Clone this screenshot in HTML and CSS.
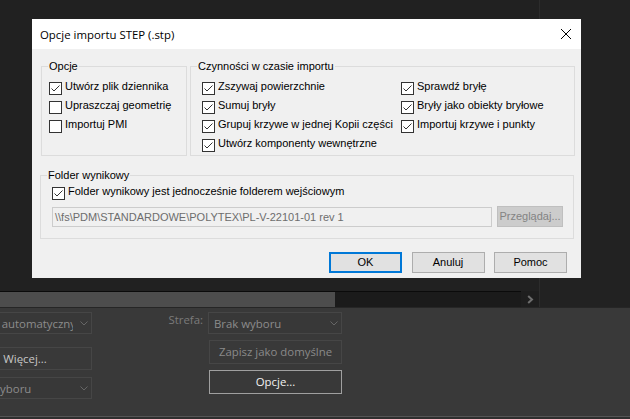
FILE: index.html
```html
<!DOCTYPE html>
<html>
<head>
<meta charset="utf-8">
<meta name="viewport" content="width=device-width, initial-scale=1">
<link rel="stylesheet" href="styles.css">
</head>
<body>
    <div class="topArea">
        <div class="mainArea">
            <div class="viewport"></div>
            <div class="hScroll">
                <div class="track"><div class="thumb"></div></div>
                <div class="scrollBtn">
                    <svg width="7" height="9" viewBox="0 0 7 9"><path d="M1.2 1 L5 4.5 L1.2 8" fill="none" stroke="#6e6e6e" stroke-width="2"/></svg>
                </div>
            </div>
        </div>
        <div class="divider"></div>
        <div class="sideArea"></div>
    </div>

    <div class="panel">
        <div class="leftCol">
            <div class="darkSelect">
                <span class="selText">Wybór automatyczny</span>
                <svg class="chev" width="8" height="5" viewBox="0 0 8 5"><path d="M0.5 0.5 L4 4 L7.5 0.5" fill="none" stroke="#666"/></svg>
            </div>
            <div class="darkBtn moreBtn">Więcej...</div>
            <div class="darkSelect lastSelect">
                <span class="selText">Brak wyboru</span>
                <svg class="chev" width="8" height="5" viewBox="0 0 8 5"><path d="M0.5 0.5 L4 4 L7.5 0.5" fill="none" stroke="#666"/></svg>
            </div>
        </div>
        <div class="labelCol"><span class="darkLabel">Strefa:</span></div>
        <div class="rightCol">
            <div class="darkSelect">
                <span class="selText">Brak wyboru</span>
                <svg class="chev" width="8" height="5" viewBox="0 0 8 5"><path d="M0.5 0.5 L4 4 L7.5 0.5" fill="none" stroke="#666"/></svg>
            </div>
            <div class="darkBtn saveBtn">Zapisz jako domyślne</div>
            <div class="darkBtn optBtn">Opcje...</div>
        </div>
    </div>
    <div class="panelFoot"></div>

    <div class="dialog">
        <div class="titleBar">
            <span class="title">Opcje importu STEP (.stp)</span>
            <span class="closeBtn">
                <svg width="10" height="10" viewBox="0 0 10 10"><path d="M0 0 L10 10 M10 0 L0 10" stroke="#000" stroke-width="1"/></svg>
            </span>
        </div>
        <div class="dialogBody">
            <div class="groupRow">
                <fieldset class="group groupOpcje">
                    <legend>Opcje</legend>
                    <div class="groupInner">
                        <label class="check"><svg class="box" width="13" height="13" viewBox="0 0 13 13"><rect x="0.5" y="0.5" width="12" height="12" fill="#fff" stroke="#333"/><path d="M2.5 6.5 L5 9 L10.5 3.5" fill="none" stroke="#333"/></svg>Utwórz plik dziennika</label>
                        <label class="check"><svg class="box" width="13" height="13" viewBox="0 0 13 13"><rect x="0.5" y="0.5" width="12" height="12" fill="#fff" stroke="#333"/></svg>Upraszczaj geometrię</label>
                        <label class="check"><svg class="box" width="13" height="13" viewBox="0 0 13 13"><rect x="0.5" y="0.5" width="12" height="12" fill="#fff" stroke="#333"/></svg>Importuj PMI</label>
                    </div>
                </fieldset>
                <fieldset class="group groupActions">
                    <legend>Czynności w czasie importu</legend>
                    <div class="groupInner actionsInner">
                        <div class="actionsCol firstCol">
                            <label class="check"><svg class="box" width="13" height="13" viewBox="0 0 13 13"><rect x="0.5" y="0.5" width="12" height="12" fill="#fff" stroke="#333"/><path d="M2.5 6.5 L5 9 L10.5 3.5" fill="none" stroke="#333"/></svg>Zszywaj powierzchnie</label>
                            <label class="check"><svg class="box" width="13" height="13" viewBox="0 0 13 13"><rect x="0.5" y="0.5" width="12" height="12" fill="#fff" stroke="#333"/><path d="M2.5 6.5 L5 9 L10.5 3.5" fill="none" stroke="#333"/></svg>Sumuj bryły</label>
                            <label class="check"><svg class="box" width="13" height="13" viewBox="0 0 13 13"><rect x="0.5" y="0.5" width="12" height="12" fill="#fff" stroke="#333"/><path d="M2.5 6.5 L5 9 L10.5 3.5" fill="none" stroke="#333"/></svg>Grupuj krzywe w jednej Kopii części</label>
                            <label class="check"><svg class="box" width="13" height="13" viewBox="0 0 13 13"><rect x="0.5" y="0.5" width="12" height="12" fill="#fff" stroke="#333"/><path d="M2.5 6.5 L5 9 L10.5 3.5" fill="none" stroke="#333"/></svg>Utwórz komponenty wewnętrzne</label>
                        </div>
                        <div class="actionsCol">
                            <label class="check"><svg class="box" width="13" height="13" viewBox="0 0 13 13"><rect x="0.5" y="0.5" width="12" height="12" fill="#fff" stroke="#333"/><path d="M2.5 6.5 L5 9 L10.5 3.5" fill="none" stroke="#333"/></svg>Sprawdź bryłę</label>
                            <label class="check"><svg class="box" width="13" height="13" viewBox="0 0 13 13"><rect x="0.5" y="0.5" width="12" height="12" fill="#fff" stroke="#333"/><path d="M2.5 6.5 L5 9 L10.5 3.5" fill="none" stroke="#333"/></svg>Bryły jako obiekty bryłowe</label>
                            <label class="check"><svg class="box" width="13" height="13" viewBox="0 0 13 13"><rect x="0.5" y="0.5" width="12" height="12" fill="#fff" stroke="#333"/><path d="M2.5 6.5 L5 9 L10.5 3.5" fill="none" stroke="#333"/></svg>Importuj krzywe i punkty</label>
                        </div>
                    </div>
                </fieldset>
            </div>
            <fieldset class="group groupFolder">
                <legend>Folder wynikowy</legend>
                <div class="groupInner folderInner">
                    <label class="check"><svg class="box" width="13" height="13" viewBox="0 0 13 13"><rect x="0.5" y="0.5" width="12" height="12" fill="#fff" stroke="#333"/><path d="M2.5 6.5 L5 9 L10.5 3.5" fill="none" stroke="#333"/></svg>Folder wynikowy jest jednocześnie folderem wejściowym</label>
                    <div class="pathRow">
                        <div class="pathBox">\\fs\PDM\STANDARDOWE\POLYTEX\PL-V-22101-01 rev 1</div>
                        <div class="browseBtn">Przeglądaj...</div>
                    </div>
                </div>
            </fieldset>
            <div class="buttonRow">
                <div class="winBtn defaultBtn">OK</div>
                <div class="winBtn">Anuluj</div>
                <div class="winBtn">Pomoc</div>
            </div>
        </div>
    </div>
</body>
</html>
```

FILE: styles.css
```css
* {
    box-sizing: border-box;
}

html {
    margin: 0px;
}

body {
    margin: 0px;
    width: 630px;
    height: 419px;
    overflow: hidden;
    position: relative;
    background: #222222;
    font-family: "Open Sans", sans-serif;
    font-size: 11.4px;
}

/* dark application behind the dialog */

.topArea {
    display: flex;
    height: 307px;
}

.mainArea {
    width: 539px;
    display: flex;
    flex-direction: column;
}

.viewport {
    height: 291px;
    background: #212121;
}

.hScroll {
    display: flex;
    height: 16px;
}

.track {
    width: 521px;
    border-top: 1px solid #0b0b0b;
    background: #1b1b1b;
}

.thumb {
    width: 335px;
    height: 15px;
    background: #4d4d4d;
}

.scrollBtn {
    flex: 1;
    background: #1e1e1e;
    display: flex;
    align-items: center;
    justify-content: center;
}

.divider {
    width: 1px;
    background: #2c2c2c;
}

.sideArea {
    flex: 1;
    background: #222222;
}

.panel {
    height: 110px;
    border-top: 1px solid #262626;
    border-bottom: 1px solid #565656;
    background: #393939;
    display: flex;
    padding-top: 4px;
}

.panelFoot {
    height: 2px;
    background: #2f2f2f;
}

.leftCol {
    width: 134px;
    margin-left: -42px;
    flex: none;
}

.labelCol {
    width: 116px;
    flex: none;
    text-align: right;
    padding-right: 5px;
}

.rightCol {
    width: 134px;
    flex: none;
}

.darkLabel {
    display: block;
    line-height: 16px;
    color: #7b7b7b;
}

.darkSelect {
    height: 22px;
    border: 1px solid #464646;
    background: #383838;
    display: flex;
    align-items: center;
    padding: 0 3px 0 5px;
    color: #8c8c8c;
}

.selText {
    flex: 1;
    overflow: hidden;
    white-space: nowrap;
}

.chev {
    flex: none;
    margin-left: 7px;
    margin-top: 1px;
}

.darkBtn {
    border: 1px solid #464646;
    background: #393939;
    text-align: center;
    white-space: nowrap;
}

.moreBtn {
    height: 23px;
    line-height: 21px;
    margin-top: 13px;
    color: #c8c8c8;
}

.lastSelect {
    margin-top: 7px;
}

.saveBtn {
    height: 24px;
    line-height: 22px;
    margin: 6px 0 0 1px;
    width: 133px;
    color: #8a8a8a;
}

.optBtn {
    height: 24px;
    line-height: 22px;
    margin: 6px 0 0 1px;
    width: 133px;
    border-color: #a0a0a0;
    color: #f2f2f2;
}

/* dialog window */

.dialog {
    position: absolute;
    left: 32px;
    top: 19px;
    width: 549px;
    height: 259px;
    background: #f0f0f0;
    font-family: "Liberation Sans", Arial, sans-serif;
    font-size: 11px;
    color: #000000;
    display: flex;
    flex-direction: column;
}

.titleBar {
    height: 30px;
    background: #ffffff;
    display: flex;
    align-items: center;
    flex: none;
}

.title {
    flex: 1;
    padding-left: 8px;
    font-family: "Open Sans", sans-serif;
    font-size: 11.4px;
}

.closeBtn {
    width: 30px;
    height: 30px;
    display: flex;
    align-items: center;
    justify-content: center;
}

.dialogBody {
    flex: 1;
    padding: 10px 6px 0 9px;
    display: flex;
    flex-direction: column;
}

.groupRow {
    display: flex;
    gap: 3px;
    align-items: stretch;
}

.group {
    margin: 0;
    padding: 0;
    border: 1px solid #dcdcdc;
    min-width: 0;
}

.group legend {
    padding: 0 1px;
    margin-left: 6px;
    line-height: 14px;
}

.groupOpcje {
    width: 146px;
}

.groupActions {
    width: 385px;
}

.groupInner {
    padding: 6px 0 0 7px;
}

.actionsInner {
    padding-left: 11px;
    display: flex;
}

.firstCol {
    width: 199px;
}

.check {
    display: flex;
    align-items: flex-start;
    height: 19px;
    line-height: 15px;
    white-space: nowrap;
}

.box {
    flex: none;
    margin-top: 3px;
    margin-right: 3px;
}

.groupFolder {
    margin-top: 12px;
    margin-left: -1px;
    width: 534px;
}

.folderInner {
    padding: 2px 0 11px 11px;
}

.pathRow {
    display: flex;
    align-items: flex-start;
    margin-top: 3px;
    height: 21px;
}

.pathBox {
    width: 440px;
    height: 20px;
    margin-top: 1px;
    border: 1px solid #cccccc;
    background: #f0f0f0;
    color: #6d6d6d;
    padding-left: 2px;
    line-height: 18px;
    white-space: nowrap;
}

.browseBtn {
    margin-left: 5px;
    width: 66px;
    height: 21px;
    background: #cccccc;
    border: 1px solid #bfbfbf;
    color: #838383;
    text-align: center;
    line-height: 19px;
}

.buttonRow {
    margin-top: 13px;
    display: flex;
    justify-content: flex-end;
    gap: 9.5px;
    padding-right: 8px;
}

.winBtn {
    width: 73px;
    height: 21px;
    border: 1px solid #adadad;
    background: #e1e1e1;
    text-align: center;
    line-height: 19px;
}

.defaultBtn {
    border: 2px solid #0078d7;
    line-height: 17px;
}
```
